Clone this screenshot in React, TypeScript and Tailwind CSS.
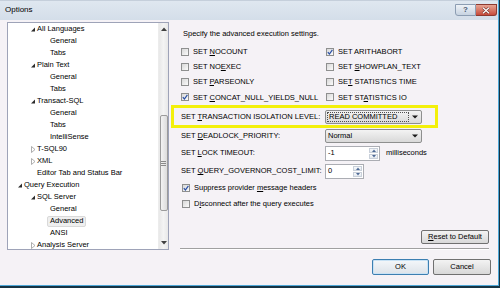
import React from 'react'

type TreeNode = { label: string; level: number; state?: 'open' | 'closed'; selected?: boolean }

const tree: TreeNode[] = [
  { label: 'All Languages', level: 1, state: 'open' },
  { label: 'General', level: 2 },
  { label: 'Tabs', level: 2 },
  { label: 'Plain Text', level: 1, state: 'open' },
  { label: 'General', level: 2 },
  { label: 'Tabs', level: 2 },
  { label: 'Transact-SQL', level: 1, state: 'open' },
  { label: 'General', level: 2 },
  { label: 'Tabs', level: 2 },
  { label: 'IntelliSense', level: 2 },
  { label: 'T-SQL90', level: 1, state: 'closed' },
  { label: 'XML', level: 1, state: 'closed' },
  { label: 'Editor Tab and Status Bar', level: 1 },
  { label: 'Query Execution', level: 0, state: 'open' },
  { label: 'SQL Server', level: 1, state: 'open' },
  { label: 'General', level: 2 },
  { label: 'Advanced', level: 2, selected: true },
  { label: 'ANSI', level: 2 },
  { label: 'Analysis Server', level: 1, state: 'closed' },
]

const indent = ['pl-[8px]', 'pl-[21px]', 'pl-[34px]']

// "&" marks the mnemonic letter
function Mn({ text }: { text: string }) {
  const i = text.indexOf('&')
  if (i < 0) return <>{text}</>
  return (
    <>
      {text.slice(0, i)}
      <u className="underline-offset-[1px]">{text[i + 1]}</u>
      {text.slice(i + 2)}
    </>
  )
}

function Expander({ state }: { state?: 'open' | 'closed' }) {
  return (
    <span className="w-[8px] h-[8px] flex items-center justify-center">
      {state === 'open' && (
        <svg width="8" height="8" viewBox="0 0 8 8">
          <polygon points="6,2.5 6,6.5 2,6.5" fill="#2b2b2b" />
        </svg>
      )}
      {state === 'closed' && (
        <svg width="8" height="8" viewBox="0 0 8 8">
          <polygon points="2.5,1.5 6,4.5 2.5,7.5" fill="#fff" stroke="#9a9a9a" strokeWidth="0.8" />
        </svg>
      )}
    </span>
  )
}

function Tree() {
  return (
    <div className="w-[162px] h-[228px] border border-[#9ea3b8] bg-white flex overflow-hidden">
      <div className="flex-1 overflow-hidden">
        {tree.map((n, i) => (
          <div key={i} className={`h-[12px] flex items-center ${indent[n.level]}`}>
            <Expander state={n.state} />
            {n.selected ? (
              <span className="-ml-[3px] px-[2px] h-[11px] flex items-center rounded-[2px] border border-[#d9d9d9] bg-[#efefef]">
                {n.label}
              </span>
            ) : (
              <span>{n.label}</span>
            )}
          </div>
        ))}
      </div>
      {/* scrollbar */}
      <div className="w-[10px] flex flex-col bg-gradient-to-r from-[#e8e8e8] via-[#f4f4f4] to-[#e8e8e8] border-l border-[#ececec]">
        <div className="h-[12px] flex items-center justify-center">
          <svg width="6" height="4" viewBox="0 0 6 4">
            <polygon points="0,4 3,0.5 6,4" fill="#404040" />
          </svg>
        </div>
        <div className="flex-1 flex flex-col">
          <div className="mt-[80px] h-[96px] mx-[0.5px] rounded-[2px] border border-[#9b9b9b] bg-gradient-to-r from-[#f3f3f3] to-[#dcdcdc] flex flex-col items-center justify-center gap-[1px]">
            <div className="w-[5px] h-px bg-[#8a8a8a]" />
            <div className="w-[5px] h-px bg-[#8a8a8a]" />
            <div className="w-[5px] h-px bg-[#8a8a8a]" />
          </div>
        </div>
        <div className="h-[12px] flex items-center justify-center">
          <svg width="6" height="4" viewBox="0 0 6 4">
            <polygon points="0,0 3,3.5 6,0" fill="#404040" />
          </svg>
        </div>
      </div>
    </div>
  )
}

function Check({ checked }: { checked?: boolean }) {
  return (
    <span className="w-[8px] h-[8px] shrink-0 border border-[#8e8f8f] bg-gradient-to-br from-[#d8d8d8] to-[#fbfbfb] flex items-center justify-center">
      {checked && (
        <svg width="6" height="6" viewBox="0 0 6 6">
          <path d="M0.8 3.2 L2.4 5 L5.4 0.8" fill="none" stroke="#2a4fa6" strokeWidth="1.2" />
        </svg>
      )}
    </span>
  )
}

function CheckRow({ label, checked }: { label: string; checked?: boolean }) {
  return (
    <div className="flex items-center gap-[4px] whitespace-nowrap">
      <Check checked={checked} />
      <span>
        <Mn text={label} />
      </span>
    </div>
  )
}

function Combo({ value, focused }: { value: string; focused?: boolean }) {
  return (
    <div className="w-[97px] h-[14px] rounded-[2px] border border-[#8e8f8f] bg-gradient-to-b from-[#f3f3f3] to-[#d9d9d9] flex items-center">
      {focused ? (
        <span className="ml-[1px] w-[82px] h-[10px] border border-dotted border-[#505050] flex items-center pl-[1px] whitespace-nowrap">
          {value}
        </span>
      ) : (
        <span className="flex-1 pl-[2px]">{value}</span>
      )}
      <span className="ml-auto w-[12px] flex items-center justify-center">
        <svg width="6" height="4" viewBox="0 0 6 4">
          <polygon points="0,0.5 6,0.5 3,3.5" fill="#1a1a1a" />
        </svg>
      </span>
    </div>
  )
}

function Spin({ value, width }: { value: string; width: string }) {
  return (
    <div className={`${width} h-[15px] border border-[#abadb3] bg-white flex`}>
      <span className="flex-1 pl-[2px] flex items-center">{value}</span>
      <div className="w-[9px] flex flex-col my-[1px] mr-[1px] gap-px">
        <div className="flex-1 border border-[#c9d0da] bg-gradient-to-b from-[#f7f9fb] to-[#e4e9ef] flex items-center justify-center">
          <svg width="4" height="3" viewBox="0 0 4 3">
            <polygon points="0,3 2,0.5 4,3" fill="#4e6a96" />
          </svg>
        </div>
        <div className="flex-1 border border-[#c9d0da] bg-gradient-to-b from-[#f7f9fb] to-[#e4e9ef] flex items-center justify-center">
          <svg width="4" height="3" viewBox="0 0 4 3">
            <polygon points="0,0 4,0 2,2.5" fill="#4e6a96" />
          </svg>
        </div>
      </div>
    </div>
  )
}

function Button({ label, width, def }: { label: string; width: string; def?: boolean }) {
  return (
    <div
      className={`${width} h-[16px] rounded-[2px] border flex items-center justify-center ${
        def
          ? 'border-[#3c7fb1] bg-gradient-to-b from-[#f4f7fa] to-[#dde3e9] shadow-[inset_0_0_0_1px_#c8e2f5]'
          : 'border-[#707070] bg-gradient-to-b from-[#f3f3f3] to-[#d8d8d8]'
      }`}
    >
      <Mn text={label} />
    </div>
  )
}

function RightPane() {
  return (
    <div className="ml-[2px] flex-1 flex flex-col">
      <div className="mt-[7px] h-[10px] flex items-center pl-[12px] whitespace-nowrap">
        Specify the advanced execution settings.
      </div>

      <div className="mt-[5px] pl-[10px] grid grid-cols-[145px_auto]">
        <div className="h-[15.25px] flex items-center"><CheckRow label="SET &NOCOUNT" /></div>
        <div className="h-[15.25px] flex items-center"><CheckRow label="SET ARITHABORT" checked /></div>
        <div className="h-[15.25px] flex items-center"><CheckRow label="SET NO&EXEC" /></div>
        <div className="h-[15.25px] flex items-center"><CheckRow label="SET &SHOWPLAN_TEXT" /></div>
        <div className="h-[15.25px] flex items-center"><CheckRow label="SET &PARSEONLY" /></div>
        <div className="h-[15.25px] flex items-center"><CheckRow label="SE&T STATISTICS TIME" /></div>
        <div className="h-[15.25px] flex items-center"><CheckRow label="SET &CONCAT_NULL_YIELDS_NULL" checked /></div>
        <div className="h-[15.25px] flex items-center"><CheckRow label="SET ST&ATISTICS IO" /></div>
      </div>

      <div className="w-[267px] h-[23px] border-[3px] border-[#f3f00a] flex items-center pl-[7px]">
        <span className="w-[144px] whitespace-nowrap"><Mn text="SET &TRANSACTION ISOLATION LEVEL:" /></span>
        <Combo value="READ COMMITTED" focused />
      </div>

      <div className="pl-[10px]">
        <div className="h-[16px] flex items-center">
          <span className="w-[144px] whitespace-nowrap"><Mn text="SET &DEADLOCK_PRIORITY:" /></span>
          <Combo value="Normal" />
        </div>
        <div className="h-[18px] flex items-center">
          <span className="w-[144px] whitespace-nowrap"><Mn text="SET &LOCK TIMEOUT:" /></span>
          <Spin value="-1" width="w-[55px]" />
          <span className="ml-[6px]">milliseconds</span>
        </div>
        <div className="h-[18px] flex items-center">
          <span className="w-[144px] whitespace-nowrap"><Mn text="SET &QUERY_GOVERNOR_COST_LIMIT:" /></span>
          <Spin value="0" width="w-[39px]" />
        </div>
        <div className="h-[16px] flex items-center pl-[1px]">
          <CheckRow label="Suppress provider &message headers" checked />
        </div>
        <div className="h-[16px] flex items-center pl-[1px]">
          <CheckRow label="D&isconnect after the query executes" />
        </div>
      </div>

      <div className="flex-1" />

      <div className="self-end w-[68px] h-[14px] rounded-[2px] border border-[#707070] bg-gradient-to-b from-[#f3f3f3] to-[#d8d8d8] flex items-center justify-center">
        <Mn text="&Reset to Default" />
      </div>
      <div className="mt-[4px] ml-[9px] h-[2px] border-t border-[#a0a0a0] border-b border-b-white" />
    </div>
  )
}

export default function App() {
  return (
    <div className="w-[500px] h-[288px] bg-[#163444] font-['Liberation_Sans',Arial,sans-serif] text-[7.5px] leading-none text-black">
      <div className="w-[499px] h-[286px] border-r border-b border-[#4ea8d8] flex flex-col">
        {/* title bar */}
        <div className="h-[20px] flex bg-gradient-to-b from-[#dfe7f0] to-[#d4dee9] border-t border-[#c5cfdb]">
          <span className="pl-[5px] pt-[5px] text-[8px]">Options</span>
          <div className="ml-auto mt-[3px] mr-[1px] flex self-start">
            <div className="w-[21px] h-[12px] rounded-bl-[3px] border border-[#8c9db2] bg-gradient-to-b from-[#eef2f7] to-[#c7d3e1] flex items-center justify-center text-[8px] font-bold text-[#4a5a70]">
              ?
            </div>
            <div className="w-[21px] h-[12px] rounded-br-[3px] border border-l-0 border-[#8d3a30] bg-gradient-to-b from-[#e6a393] to-[#c64a3b] flex items-center justify-center">
              <svg width="8" height="7" viewBox="0 0 8 7">
                <path d="M1 0.8 L7 6.2 M7 0.8 L1 6.2" stroke="#6b2a22" strokeWidth="2.4" />
                <path d="M1 0.8 L7 6.2 M7 0.8 L1 6.2" stroke="#fff" strokeWidth="1.3" />
              </svg>
            </div>
          </div>
        </div>

        {/* body */}
        <div className="flex-1 flex flex-col bg-[#f5f2f6]">
          <div className="flex pl-[7px] pr-[9px] pt-[2px]">
            <Tree />
            <RightPane />
          </div>
          <div className="mt-[9px] pr-[7px] flex justify-end gap-[4px]">
            <Button label="OK" width="w-[57px]" def />
            <Button label="Cancel" width="w-[58px]" />
          </div>
        </div>
      </div>
    </div>
  )
}
